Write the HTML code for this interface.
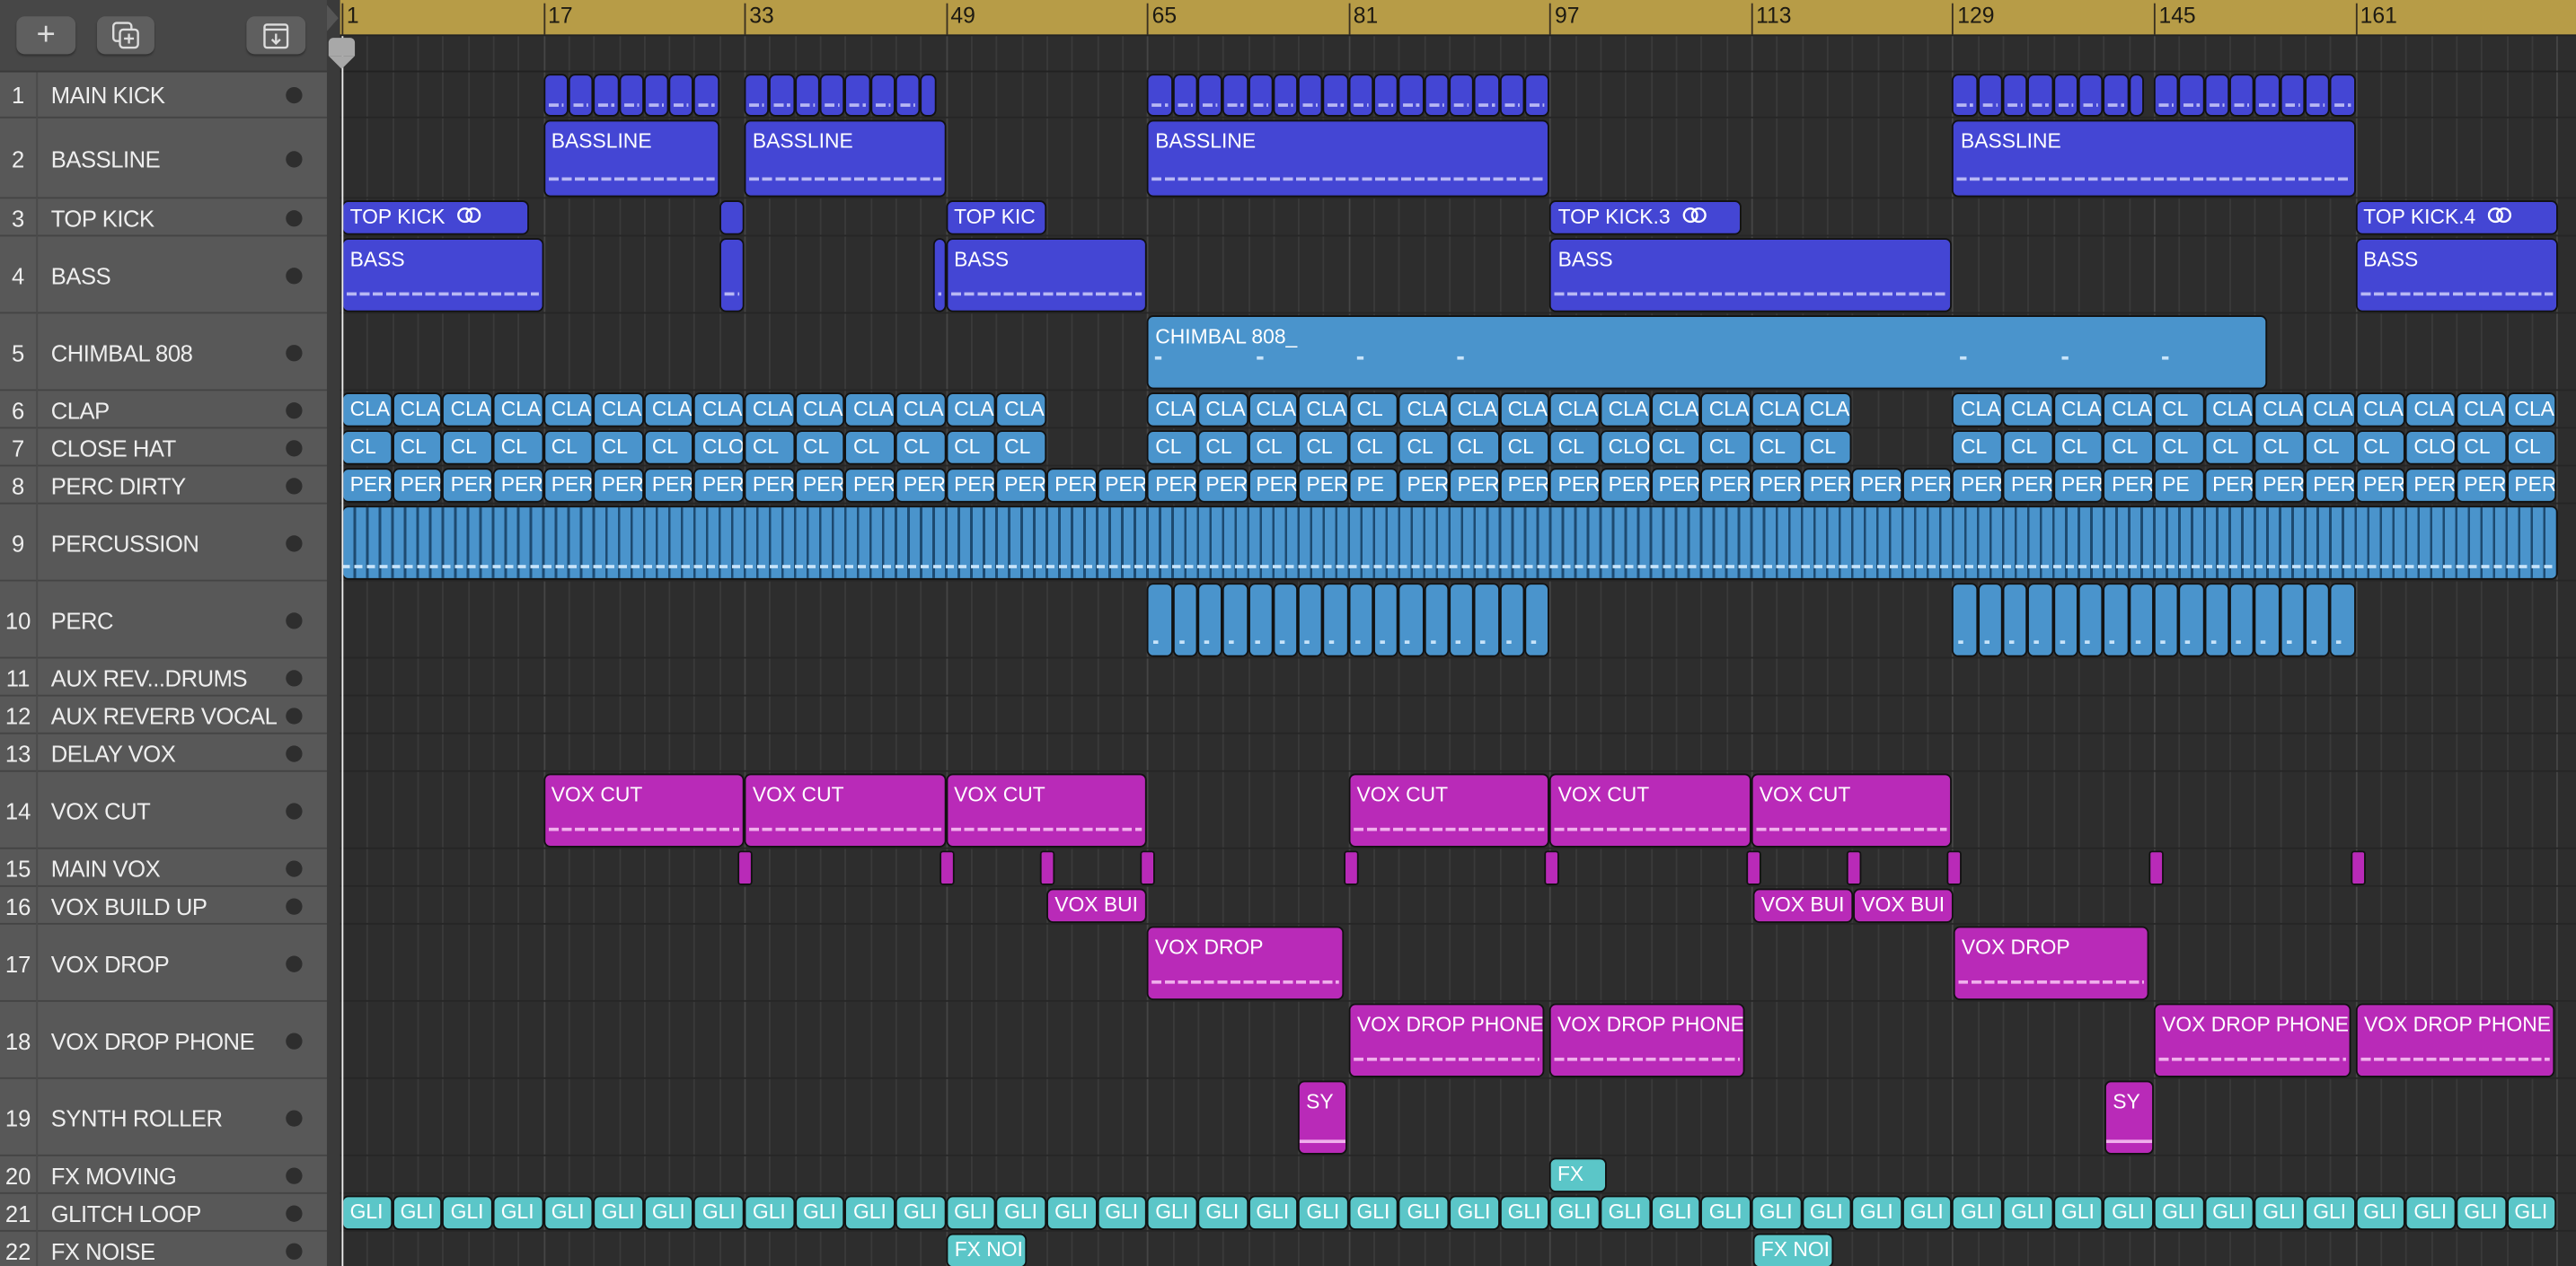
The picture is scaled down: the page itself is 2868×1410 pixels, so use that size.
<!DOCTYPE html>
<html><head><meta charset="utf-8">
<style>
html,body{margin:0;padding:0;width:2868px;height:1410px;overflow:hidden;background:#2d2d2d}
#s{position:absolute;left:0;top:0;width:1568px;height:771px;transform:scale(1.82908);transform-origin:0 0;font-family:"Liberation Sans",sans-serif;overflow:hidden;background:#2d2d2d}
.a{position:absolute;box-sizing:border-box}
.clip{position:absolute;box-sizing:border-box;border:1.5px solid #111;border-radius:4px;overflow:hidden;color:#fff;font-size:12.5px;white-space:nowrap;padding:2px 0 0 4px;line-height:15px}
.dash{position:absolute;left:2px;right:2px;height:2px}
.tn{position:absolute;left:0;width:22px;text-align:center;color:#eee;font-size:14px}
.tl{position:absolute;left:31px;color:#eee;font-size:14px;white-space:nowrap;letter-spacing:-0.25px}
.dot{position:absolute;left:174px;width:10px;height:10px;border-radius:50%;background:#2e2e2e}
.btn{position:absolute;top:10px;height:23px;background:#5f5f5f;border-radius:5px;box-shadow:0 1px 1px #333}
</style></head><body><div id="s"></div>
<script>
const S=document.getElementById('s');
function el(cls,st,txt){const d=document.createElement('div');d.className=cls;d.style.cssText=st;if(txt!==undefined)d.innerHTML=txt;S.appendChild(d);return d;}
const X=b=>208+(b-1)*7.66;
const rows=[[44,28],[72,49],[121,23],[144,47],[191,47],[238,23],[261,23],[284,23],[307,47],[354,47],[401,23],[424,23],[447,23],[470,47],[517,23],[540,23],[563,47],[610,47],[657,47],[704,23],[727,23],[750,23]];
const names=["MAIN KICK","BASSLINE","TOP KICK","BASS","CHIMBAL 808","CLAP","CLOSE HAT","PERC DIRTY","PERCUSSION","PERC","AUX REV...DRUMS","AUX REVERB VOCAL","DELAY VOX","VOX CUT","MAIN VOX","VOX BUILD UP","VOX DROP","VOX DROP PHONE","SYNTH ROLLER","FX MOVING","GLITCH LOOP","FX NOISE"];
for(let b=1;b<=177;b+=2){el('a',`left:${X(b)}px;top:21px;width:1px;height:760px;background:${(b-1)%16==0?'#454545':'#3a3a3a'}`);}
rows.forEach(r=>el('a',`left:207px;top:${r[0]+r[1]-1}px;width:1361px;height:1px;background:#262626`));
el('a','left:200px;top:0;width:1368px;height:21px;background:#b79c47');
for(let b=1;b<=161;b+=16){el('a',`left:${X(b)}px;top:2px;width:1px;height:19px;background:#3a3020`);el('a',`left:${X(b)+3}px;top:2px;color:#1d1a12;font-size:13.5px`,b);}
el('a','left:200px;top:21px;width:1368px;height:1px;background:#222');
el('a','left:207px;top:43px;width:1361px;height:1px;background:#222');
el('a','left:0;top:0;width:199px;height:44px;background:#474747');
el('a','left:199px;top:0;width:8px;height:771px;background:#3a3a3a');
el('a','left:199px;top:3px;width:0;height:0;border-top:8px solid transparent;border-bottom:8px solid transparent;border-left:7px solid #555');
el('btn','left:10px;width:36px');el('a','left:10px;top:9px;width:36px;text-align:center;color:#ddd;font-size:20px;line-height:24px','+');
el('btn','left:59px;width:35px');
el('a','left:68px;top:13px;width:0;height:0','<svg width="18" height="18" viewBox="0 0 18 18" fill="none" stroke="#ddd" stroke-width="1.3"><rect x="1" y="1" width="11" height="11" rx="2"/><rect x="5" y="5" width="11" height="11" rx="2" fill="#5f5f5f"/><path d="M10.5 7.5v6M7.5 10.5h6"/></svg>');
el('btn','left:150px;width:36px');
el('a','left:159px;top:13px;width:0;height:0','<svg width="18" height="18" viewBox="0 0 18 18" fill="none" stroke="#ddd" stroke-width="1.3"><rect x="2" y="2" width="14" height="14" rx="1.5"/><path d="M2 5h14M9 7.5v6M6.5 11l2.5 2.5 2.5-2.5"/></svg>');
el('a','left:0;top:43px;width:199px;height:1px;background:#3a3a3a');
rows.forEach((r,i)=>{
 el('a',`left:0;top:${r[0]}px;width:199px;height:${r[1]}px;background:#585858;border-bottom:1px solid #444`);
 el('a',`left:22px;top:${r[0]}px;width:1px;height:${r[1]}px;background:#4a4a4a`);
 const c=r[0]+r[1]/2;
 el('tn',`top:${c-8}px`,i+1);el('tl',`top:${c-8}px`,names[i]);el('dot',`top:${c-5}px`);
});
const BL='#4446d4',LB='#4a94cc',MG='#b92ab8',TL='#5bc6c8';
const DC={[BL]:'#b8b8f4',[LB]:'#c8e4fa',[MG]:'#f0b0ec',[TL]:'#d0f4f4'};
function c(ri,x1,x2,col,lab,opt){const r=rows[ri];const d=el('clip',`left:${x1}px;top:${r[0]+1}px;width:${x2-x1}px;height:${r[1]-2}px;background:${col}`,lab||'');
 if(r[1]>30)d.style.paddingTop='5px';
 if(opt!=='none'&&(r[1]>30||opt)){const dd=document.createElement('div');dd.className='dash';dd.style.cssText=`bottom:${r[1]>30?9:5}px;background:repeating-linear-gradient(90deg,${DC[col]} 0 6px,transparent 6px 8px)`;d.appendChild(dd);}return d;}
function seq(ri,b1,n,w,col,lab,opt){for(let k=0;k<n;k++){const l=typeof lab=='function'?lab(k):lab;c(ri,X(b1+k*w),X(b1+(k+1)*w),col,l,opt);}}
seq(0,17,7,2,BL,'',1);seq(0,33,7,2,BL,'',1);c(0,X(47),X(48.2),BL,'');seq(0,65,8,2,BL,'',1);seq(0,81,8,2,BL,'',1);seq(0,129,7,2,BL,'',1);c(0,X(143),X(144.2),BL,'');seq(0,145,8,2,BL,'',1);
document.querySelectorAll('.clip').forEach(d=>{d.style.padding='0';});
[[17,31],[33,49],[65,97],[129,161]].forEach(p=>c(1,X(p[0]),X(p[1]),BL,'BASSLINE'));
const ring='&nbsp;&nbsp;<svg width="15" height="10" viewBox="0 0 15 10" fill="none" stroke="#fff" stroke-width="1.3"><circle cx="5" cy="5" r="4"/><circle cx="10" cy="5" r="4"/></svg>';
c(2,X(1),X(15.9),BL,'TOP KICK'+ring);c(2,X(31),X(33),BL,'');c(2,X(49),X(57),BL,'TOP KIC');c(2,X(97),X(112.2),BL,'TOP KICK.3'+ring);c(2,X(161),X(177.1),BL,'TOP KICK.4'+ring);
c(3,X(1),X(17),BL,'BASS');c(3,X(31),X(33),BL,'');c(3,X(48),X(49),BL,'');c(3,X(49),X(65),BL,'BASS');c(3,X(97),X(129),BL,'BASS');c(3,X(161),X(177.1),BL,'BASS');
const ch=c(4,X(65),X(154),LB,'CHIMBAL 808_','none');
[0,8,16,24,64,72,80].forEach(b=>{const d=document.createElement('div');d.style.cssText=`position:absolute;left:${4+b*7.66}px;top:24px;width:4px;height:2px;background:#c8e4fa`;ch.appendChild(d);});
seq(5,1,14,4,LB,'CLA');seq(5,65,8,4,LB,k=>k==4?'CL':'CLA');seq(5,97,6,4,LB,'CLA');seq(5,129,12,4,LB,k=>k==4?'CL':'CLA');
seq(6,1,14,4,LB,k=>k==7?'CLO':'CL');seq(6,65,8,4,LB,'CL');seq(6,97,6,4,LB,k=>k==1?'CLO':'CL');seq(6,129,12,4,LB,k=>k==9?'CLO':'CL');
seq(7,1,44,4,LB,k=>(k==20||k==36)?'PE':'PER');
const r9=rows[8];
el('clip',`left:${X(1)}px;top:${r9[0]+1}px;width:${X(177.1)-X(1)}px;height:${r9[1]-2}px;background:${LB};padding:0;background-image:repeating-linear-gradient(90deg,transparent 0 6.16px,#1d4a70 6.16px 7.66px)`);
el('a',`left:${X(1)}px;top:${r9[0]+r9[1]-10}px;width:${X(177)-X(1)}px;height:2px;background:repeating-linear-gradient(90deg,#c8e4fa 0 5px,transparent 5px 7.66px)`);
function perc(b1){for(let k=0;k<16;k++){const d=c(9,X(b1+k*2),X(b1+k*2+2),LB,'','none');const q=document.createElement('div');q.style.cssText='position:absolute;left:3px;bottom:7px;width:3px;height:2px;background:#c8e4fa';d.appendChild(q);}}
perc(65);perc(129);
[[17,33],[33,49],[49,65],[81,97],[97,113],[113,129]].forEach(p=>c(13,X(p[0]),X(p[1]),MG,'VOX CUT'));
[449,572,633,694,818,940,1063,1124,1185,1308,1431].forEach(x=>{const d=c(14,x,x+9,MG,'');d.style.padding='0';d.style.borderRadius='2px';});
c(15,637,698,MG,'VOX BUI');c(15,1067,1128,MG,'VOX BUI');c(15,1128,1189,MG,'VOX BUI');
c(16,698,818,MG,'VOX DROP');c(16,1189,1308,MG,'VOX DROP');
[[821,940],[943,1062],[1311,1431],[1434,1555]].forEach(p=>c(17,p[0],p[1],MG,'VOX DROP PHONE'));
[790,1281].forEach(x=>{const d=c(18,x,x+30,MG,'SY','none');const q=document.createElement('div');q.style.cssText='position:absolute;left:0;right:0;bottom:6px;height:2px;background:#f0b0ec';d.appendChild(q);});
c(19,943,978,TL,'FX');
seq(20,1,44,4,TL,'GLI');
c(21,576,625,TL,'FX NOI');c(21,1067,1116,TL,'FX NOI');
el('a','left:207.5px;top:22px;width:1.2px;height:760px;background:#eee');
el('a','left:200px;top:23px;width:16px;height:11px;background:#a8a8a8;border-radius:3px 3px 0 0');
el('a','left:200px;top:34px;width:0;height:0;border-left:8px solid transparent;border-right:8px solid transparent;border-top:8px solid #a8a8a8');
</script></body></html>
